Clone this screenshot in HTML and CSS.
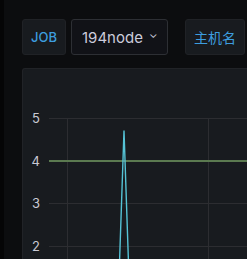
FILE: index.html
```html
<!DOCTYPE html>
<html lang="zh-CN">
<head>
<meta charset="UTF-8" />
<title>Dashboard</title>
<link rel="stylesheet" href="styles.css">
</head>
<body>
<div class="side"></div>
<div class="main">
  <div class="vars">
    <span class="var-label">JOB</span>
    <div class="var-select">194node <span class="chev">&#8964;</span></div>
    <span class="var-label wide">主机名</span>
  </div>
  <div class="panel">
    <svg class="chart" width="226" height="200" viewBox="0 0 226 200">
      <g stroke="#2c2d31" stroke-width="1">
        <line x1="27" y1="50.5" x2="226" y2="50.5" />
        <line x1="27" y1="135.5" x2="226" y2="135.5" />
        <line x1="27" y1="178.5" x2="226" y2="178.5" />
        <line x1="45.5" y1="50" x2="45.5" y2="200" />
        <line x1="186.5" y1="50" x2="186.5" y2="200" />
      </g>
      <line x1="27" y1="93" x2="226" y2="93" stroke="#5b7a50" stroke-width="2" />
      <polyline points="97.5,195 102,62.5 106.5,195" fill="none" stroke="#55c3d6" stroke-width="1.4" />
      <g class="ticks">
        <text x="18" y="55" text-anchor="end">5</text>
        <text x="18" y="97.5" text-anchor="end">4</text>
        <text x="18" y="140" text-anchor="end">3</text>
        <text x="18" y="183" text-anchor="end">2</text>
      </g>
    </svg>
  </div>
</div>
</body>
</html>
```

FILE: styles.css
```css
* {
  box-sizing: border-box;
}
html, body {
  margin: 0;
  padding: 0;
  height: 100%;
  overflow: hidden;
}
body {
  display: flex;
  background: #0c0d0f;
  font-family: Inter, "Noto Sans CJK SC", sans-serif;
  color: #ccccdc;
}
.side {
  width: 4px;
  background: #050506;
  flex-shrink: 0;
}
.main {
  flex: 1;
  min-width: 0;
  padding: 19px 0 0 18px;
}
.vars {
  display: flex;
  align-items: center;
  height: 36px;
}
.var-label {
  display: flex;
  align-items: center;
  justify-content: center;
  width: 44px;
  height: 36px;
  background: #181b1f;
  border: 1px solid #202226;
  border-radius: 3px;
  color: #3d9ddf;
  font-size: 13px;
  font-weight: 500;
}
.var-label.wide {
  width: 60px;
  margin-left: 17px;
  font-size: 14px;
  font-weight: 400;
}
.var-select {
  display: flex;
  align-items: center;
  width: 97px;
  height: 36px;
  margin-left: 5px;
  padding-left: 10px;
  background: #111217;
  border: 1px solid #2d2f34;
  border-radius: 3px;
  font-size: 15px;
  color: #ccccdc;
}
.chev {
  font-size: 11px;
  margin-left: 6px;
  margin-top: -6px;
}
.panel {
  margin-top: 13px;
  width: 225px;
  height: 200px;
  background: #181b1f;
  border: 1px solid #212327;
  border-right: none;
  border-radius: 3px 0 0 3px;
  overflow: hidden;
}
.chart {
  display: block;
  margin: -1px;
}
.ticks text {
  fill: #c9c9d4;
  font-size: 13px;
  font-family: Inter, sans-serif;
}
```
